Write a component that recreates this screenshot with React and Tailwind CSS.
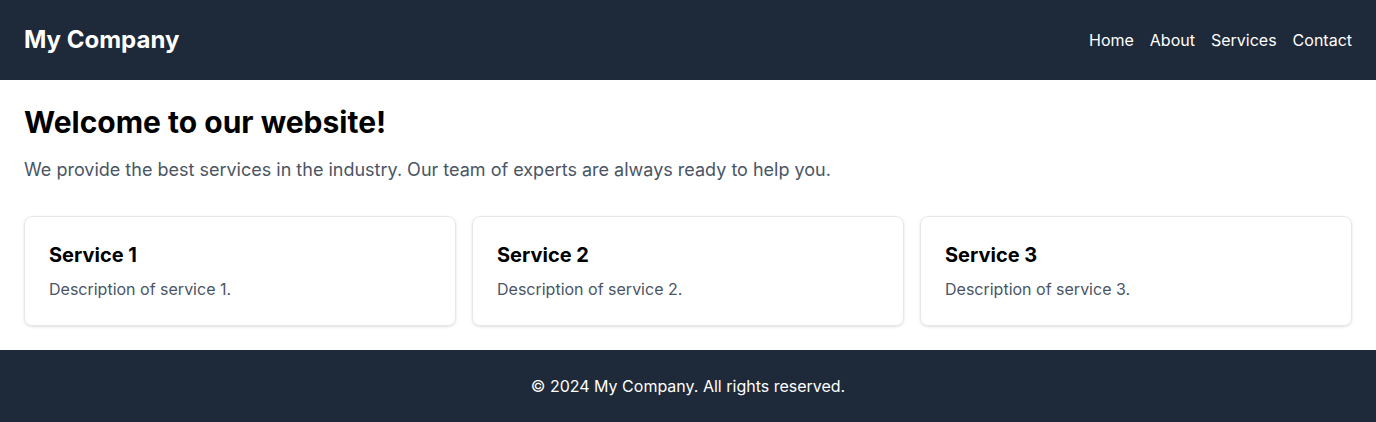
import React from "react";

const services = [
  { id: 1, title: "Service 1", text: "Description of service 1." },
  { id: 2, title: "Service 2", text: "Description of service 2." },
  { id: 3, title: "Service 3", text: "Description of service 3." },
];

const App = () => {
  return (
    <div className="font-['Inter',sans-serif] bg-white">
      <header className="bg-gray-800 text-white p-6 flex items-center justify-between">
        <h1 className="text-2xl font-bold">My Company</h1>
        <nav className="flex gap-x-4">
          <a href="#">Home</a>
          <a href="#">About</a>
          <a href="#">Services</a>
          <a href="#">Contact</a>
        </nav>
      </header>
      <main className="p-6">
        <h2 className="text-3xl font-bold mb-4">Welcome to our website!</h2>
        <p className="text-lg text-gray-600 mb-8">
          We provide the best services in the industry. Our team of experts are
          always ready to help you.
        </p>
        <div className="grid grid-cols-3 gap-4">
          {services.map((item) => (
            <div
              key={item.id}
              className="border border-gray-200 rounded-lg shadow-sm p-6"
            >
              <h3 className="text-xl font-bold mb-2">{item.title}</h3>
              <p className="text-gray-600">{item.text}</p>
            </div>
          ))}
        </div>
      </main>
      <footer className="bg-gray-800 text-white p-6 text-center">
        <p>&copy; 2024 My Company. All rights reserved.</p>
      </footer>
    </div>
  );
};

export default App;
